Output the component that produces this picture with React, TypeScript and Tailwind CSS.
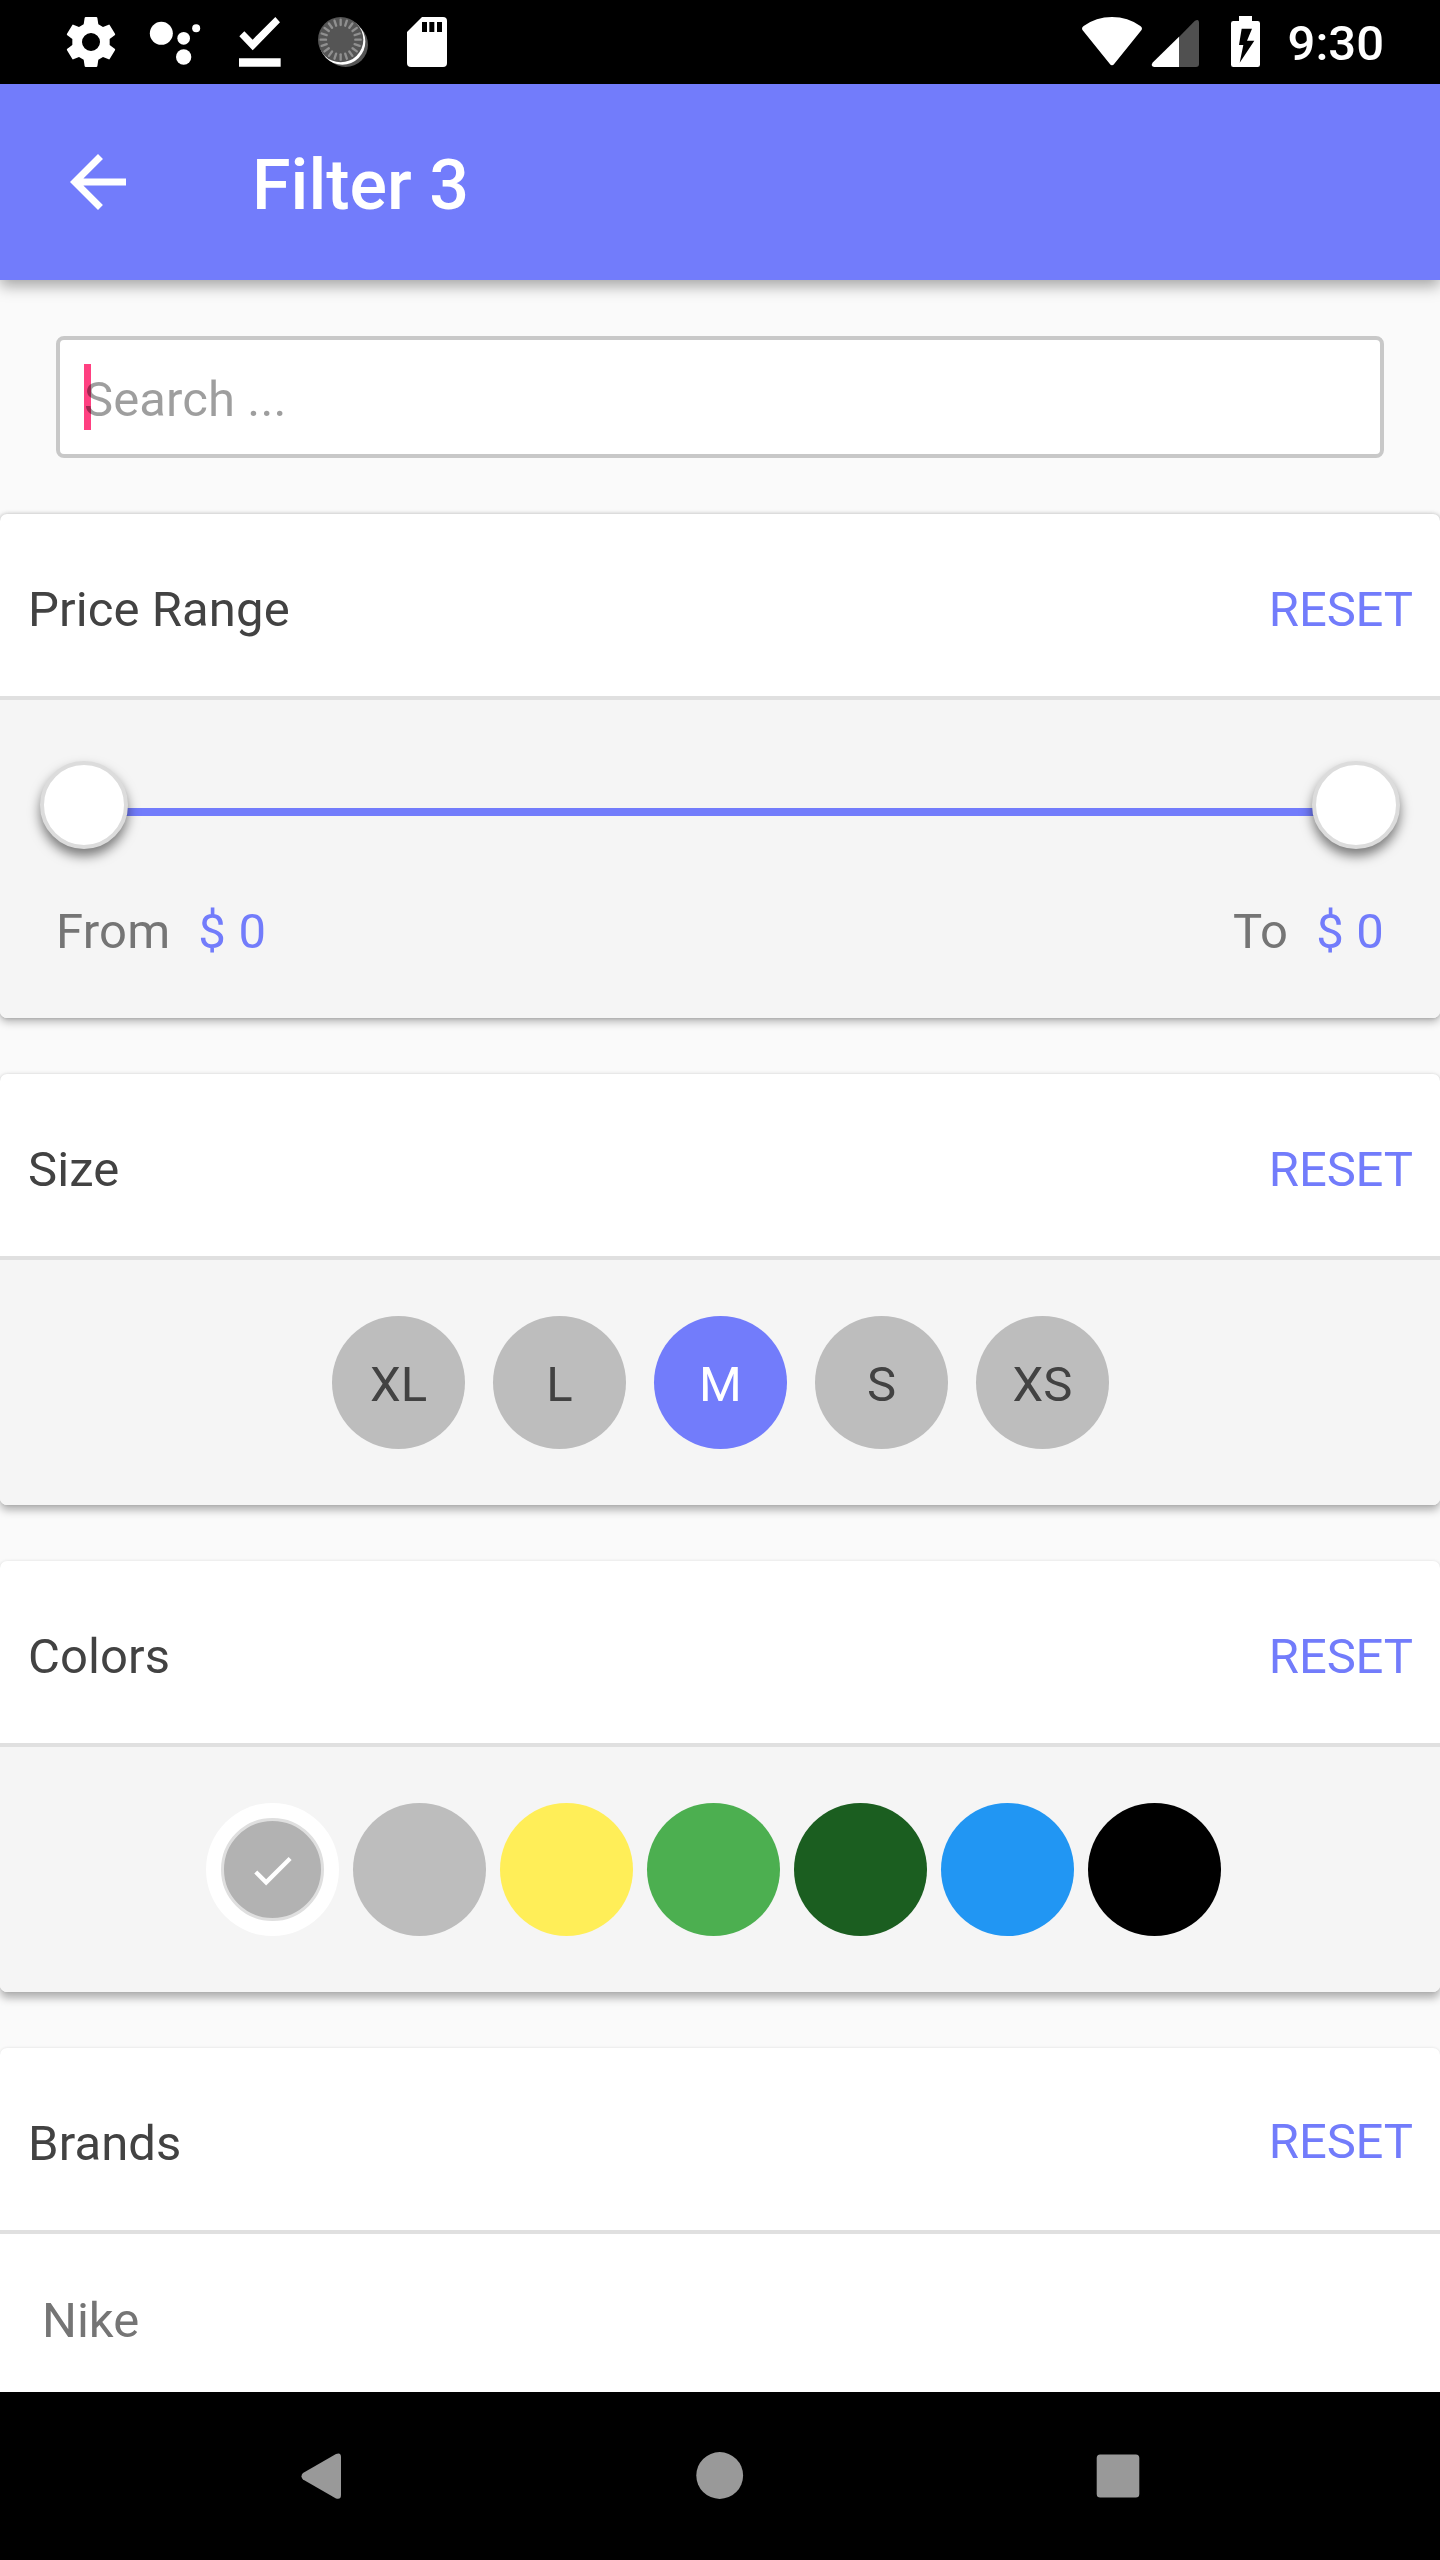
import type { ReactNode } from "react";

const TICKS = Array.from({ length: 20 }, (_, i) => i * 18);

const SIZES = ["XL", "L", "M", "S", "XS"];

const COLORS = [
  { name: "White", className: "bg-white" },
  { name: "Grey", className: "bg-[#bdbdbd]" },
  { name: "Yellow", className: "bg-[#ffee58]" },
  { name: "Green", className: "bg-[#4caf50]" },
  { name: "Dark green", className: "bg-[#1b5e20]" },
  { name: "Blue", className: "bg-[#2196f3]" },
  { name: "Black", className: "bg-black" },
];

function StatusBar() {
  return (
    <div className="flex h-[84px] shrink-0 items-start justify-between bg-black pt-[15px] pr-[56px] pl-[65px] text-white">
      <div className="flex">
        <svg className="h-[54px] w-[52px]" viewBox="75 45 156 162" fill="currentColor">
          <path
            fillRule="evenodd"
            d="M137 51H169Q171 51 172 53L175 73L189 81L206 74Q208 73 209 75L225 101Q226 103 225 105L209 117V135L225 147Q226 149 225 151L209 177Q208 179 206 178L189 171L175 179L172 199Q171 201 169 201H137Q135 201 134 199L131 179L117 171L100 178Q98 179 97 177L81 151Q80 149 81 147L97 135V117L81 105Q80 103 81 101L97 75Q98 73 100 74L117 81L131 73L134 53Q135 51 137 51ZM153 99A27 27 0 1 0 153 153A27 27 0 1 0 153 99Z"
          />
        </svg>
        <svg className="ml-[32px] h-[54px] w-[52px]" viewBox="327 45 156 162" fill="currentColor">
          <circle cx="364" cy="100" r="34.5" />
          <circle cx="431" cy="115" r="19" />
          <circle cx="468.5" cy="85" r="12" />
          <circle cx="431" cy="171" r="23" />
        </svg>
        <svg className="ml-[37px] h-[54px] w-[44px]" viewBox="594 45 132 162" fill="currentColor">
          <path d="M598 109L613 94L638 119L706 51L720 67L638 151Z" />
          <path d="M597 175H722V200H597Z" />
        </svg>
        <svg className="ml-[35px] h-[54px] w-[53px]" viewBox="831 45 159 162">
          <circle cx="917" cy="134" r="67" fill="#555" />
          <circle cx="907" cy="125" r="69" fill="#fff" />
          <circle cx="902" cy="119" r="68" fill="#555" />
          {TICKS.map((angle) => (
            <path
              key={angle}
              d="M902 59V75"
              stroke="#909090"
              strokeWidth="7"
              strokeLinecap="round"
              transform={`rotate(${angle} 902 119)`}
            />
          ))}
        </svg>
        <svg className="ml-[36px] h-[54px] w-[42px]" viewBox="1098 45 126 162">
          <path
            fill="#fff"
            d="M1101 96L1146 51H1209Q1221 51 1221 63V189Q1221 201 1209 201H1113Q1101 201 1101 189Z"
          />
          <path d="M1146 66H1161V96H1146ZM1168 66H1183V96H1168ZM1191 66H1206V96H1191Z" fill="#000" />
        </svg>
      </div>
      <div className="flex">
        <svg className="h-[54px] w-[62px]" viewBox="63 45 186 162" fill="currentColor">
          <path d="M68 91Q63 84 71 78Q108 51 156 51Q204 51 241 78Q249 84 244 91L163 191Q156 200 149 191Z" />
        </svg>
        <svg className="ml-[8px] h-[54px] w-[49px]" viewBox="273 45 147 162">
          <path d="M357 111L404 63Q417 54 417 69V192Q417 201 408 201H357Z" fill="#505050" />
          <path d="M357 110V201H282Q270 198 279 187Z" fill="#fff" />
        </svg>
        <svg className="ml-[30px] h-[54px] w-[31px]" viewBox="510 45 93 162">
          <path
            fill="#fff"
            d="M537 48H576V63H593Q600 63 600 70V194Q600 201 593 201H520Q513 201 513 194V70Q513 63 520 63H537Z"
          />
          <path d="M545 86H576L561 122H583L539 188L550 135H537Z" fill="#000" />
        </svg>
        <span className="ml-[27px] text-[49px] leading-[58px] font-medium">9:30</span>
      </div>
    </div>
  );
}

function AppBar() {
  return (
    <header className="relative z-10 flex h-[196px] shrink-0 items-center bg-[#727cfb] pl-[56px] text-white shadow-[0_6px_14px_rgba(0,0,0,0.34)]">
      <svg className="size-[84px]" viewBox="0 0 24 24" fill="currentColor">
        <path d="M20 11H7.83l5.59-5.59L12 4l-8 8 8 8 1.41-1.41L7.83 13H20v-2z" />
      </svg>
      <h1 className="ml-[112px] pt-[5px] text-[70px] leading-[82px] font-medium">Filter 3</h1>
    </header>
  );
}

type FilterCardProps = {
  title: string;
  shadow: string;
  resetClass?: string;
  children: ReactNode;
};

function FilterCard({ title, shadow, resetClass = "", children }: FilterCardProps) {
  return (
    <section className={`shrink-0 overflow-hidden rounded-[7px] bg-white ${shadow}`}>
      <div className="flex h-[186px] items-center justify-between border-b-4 border-[#e0e0e0] px-[28px] pt-[10px] text-[49px] leading-[58px]">
        <h2 className="tracking-[0.1px] text-[#424242]">{title}</h2>
        <button className={`-mr-px tracking-[-0.1px] text-[#727cfb] ${resetClass}`}>RESET</button>
      </div>
      {children}
    </section>
  );
}

function Thumb() {
  return (
    <div className="size-[88px] rounded-full border-4 border-[#dcdcdc] bg-white shadow-[0_7px_12px_rgba(0,0,0,0.5)]" />
  );
}

function PriceValue({ label }: { label: string }) {
  return (
    <div className="flex gap-[28px] tracking-[0.2px]">
      <span className="text-[#757575]">{label}</span>
      <span className="text-[#727cfb]">$ 0</span>
    </div>
  );
}

export default function App() {
  return (
    <div className="flex h-[2560px] w-[1440px] flex-col overflow-hidden bg-[#fafafa] font-['Roboto',sans-serif]">
      <StatusBar />
      <AppBar />
      <main className="flex min-h-0 flex-1 flex-col overflow-hidden">
        <div className="mx-[56px] mt-[56px] mb-[56px] flex h-[122px] shrink-0 items-center rounded-[8px] border-4 border-[#c8c8c8] bg-white px-[24px]">
          <div className="h-[66px] w-[7px] bg-[#ff4081]" />
          <span className="relative -ml-[7px] pt-[5px] text-[49px] leading-[58px] tracking-[0.1px] text-black/38">
            Search ...
          </span>
        </div>

        <div className="flex flex-col gap-[56px]">
          <FilterCard
            title="Price Range"
            shadow="shadow-[0_4px_8px_rgba(0,0,0,0.27),0_0_4px_rgba(0,0,0,0.2)]"
          >
            <div className="h-[318px] bg-[#f5f5f5] pt-[61px]">
              <div className="mx-[40px] flex justify-between bg-[linear-gradient(#727cfb,#727cfb)] bg-[length:1272px_8px] bg-[position:44px_47px] bg-no-repeat">
                <Thumb />
                <Thumb />
              </div>
              <div className="mt-[54px] flex justify-between px-[56px] text-[49px] leading-[58px]">
                <PriceValue label="From" />
                <PriceValue label="To" />
              </div>
            </div>
          </FilterCard>

          <FilterCard
            title="Size"
            shadow="shadow-[0_5px_8px_rgba(0,0,0,0.3),0_0_3px_rgba(0,0,0,0.12)]"
          >
            <div className="flex h-[245px] gap-[28px] bg-[#f5f5f5] pt-[56px] pl-[332px]">
              {SIZES.map((size) => (
                <button
                  key={size}
                  className={
                    size === "M"
                      ? "size-[133px] rounded-full bg-[#727cfb] pt-[5px] text-[49px] leading-[58px] text-white"
                      : "size-[133px] rounded-full bg-[#bdbdbd] pt-[5px] text-[49px] leading-[58px] text-[#424242]"
                  }
                >
                  {size}
                </button>
              ))}
            </div>
          </FilterCard>

          <FilterCard
            title="Colors"
            shadow="shadow-[0_6px_8px_rgba(0,0,0,0.3),0_0_3px_rgba(0,0,0,0.08)]"
          >
            <div className="flex h-[245px] gap-[14px] bg-[#f5f5f5] pt-[56px] pl-[206px]">
              {COLORS.map(({ name, className }, index) => (
                <button
                  key={name}
                  aria-label={name}
                  className={`flex size-[133px] items-center justify-center rounded-full ${className}`}
                >
                  {index === 0 && (
                    <span className="flex size-[103px] items-center justify-center rounded-full border-3 border-[#dfdfdf] bg-[#b2b2b2] text-white">
                      <svg className="mt-[2px] size-[51px]" viewBox="0 0 24 24" fill="currentColor">
                        <path d="M9 16.17L4.83 12l-1.42 1.41L9 19 21 7l-1.41-1.41z" />
                      </svg>
                    </span>
                  )}
                </button>
              ))}
            </div>
          </FilterCard>

          <FilterCard title="Brands" shadow="shadow-[0_0_3px_rgba(0,0,0,0.12)]" resetClass="mb-[4px]">
            <div className="h-[210px] px-[42px] pt-[58px] text-[49px] leading-[58px] text-[#757575]">Nike</div>
          </FilterCard>
        </div>
      </main>

      <nav className="flex h-[168px] shrink-0 items-center bg-black pl-[301px] text-[#999]">
        <svg className="h-[48px] w-[41px]" viewBox="0 0 41 48" fill="currentColor">
          <path d="M2 21L35 2Q40 0 40 5V43Q40 48 35 46.5L2 27.5Q-1 24 2 21Z" />
        </svg>
        <svg className="ml-[354px] size-[48px]" viewBox="0 0 48 48" fill="currentColor">
          <circle cx="23.7" cy="23.5" r="23.4" />
        </svg>
        <svg className="ml-[352px] size-[44px]" viewBox="0 0 44 44" fill="currentColor">
          <rect x="0.7" y="0.5" width="42.6" height="43" rx="3.5" />
        </svg>
      </nav>
    </div>
  );
}
